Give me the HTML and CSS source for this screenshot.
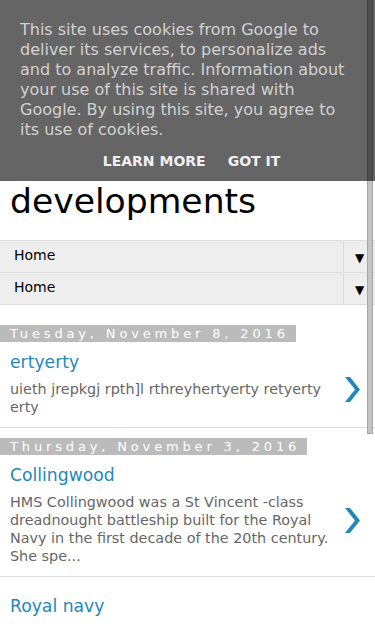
FILE: index.html
```html
<!DOCTYPE html>
<html lang="en">
<head>
<meta charset="utf-8">
<title>developments</title>
<link rel="stylesheet" href="styles.css">
</head>
<body>
<div class="scrollbar"></div>
<div class="cookie-bar">
  <p class="cookie-text">This site uses cookies from Google to deliver its services, to personalize ads and to analyze traffic. Information about your use of this site is shared with Google. By using this site, you agree to its use of cookies.</p>
  <div class="cookie-buttons">
    <a class="cookie-btn">LEARN MORE</a>
    <a class="cookie-btn">GOT IT</a>
  </div>
</div>
<header class="header">
  <h1 class="title">developments</h1>
</header>
<nav class="nav">
  <div class="nav-row"><span class="nav-label">Home</span><span class="nav-arrow">&#9660;</span></div>
  <div class="nav-row"><span class="nav-label">Home</span><span class="nav-arrow">&#9660;</span></div>
</nav>
<main class="main">
  <section class="date-group">
    <h2 class="date-header"><span>Tuesday, November 8, 2016</span></h2>
    <article class="post">
      <div class="post-body">
        <h3 class="post-title">ertyerty</h3>
        <p class="post-snippet">uieth jrepkgj rpth]l rthreyhertyerty retyerty erty</p>
      </div>
      <svg class="chev" width="16" height="26" viewBox="0 0 16 26"><polygon points="0,0 5,0 15,12.5 5,25 0,25 10,12.5" fill="#2288bb"/></svg>
    </article>
  </section>
  <section class="date-group">
    <h2 class="date-header"><span>Thursday, November 3, 2016</span></h2>
    <article class="post">
      <div class="post-body">
        <h3 class="post-title">Collingwood</h3>
        <p class="post-snippet">HMS Collingwood was a St Vincent -class dreadnought battleship built for the Royal Navy in the first decade of the 20th century. She spe...</p>
      </div>
      <svg class="chev" width="16" height="26" viewBox="0 0 16 26"><polygon points="0,0 5,0 15,12.5 5,25 0,25 10,12.5" fill="#2288bb"/></svg>
    </article>
    <article class="post">
      <div class="post-body">
        <h3 class="post-title">Royal navy</h3>
        <p class="post-snippet">The Royal Navy (RN) is the United Kingdom's naval warfare force. Although warships were used by English kings...</p>
      </div>
      <svg class="chev" width="16" height="26" viewBox="0 0 16 26"><polygon points="0,0 5,0 15,12.5 5,25 0,25 10,12.5" fill="#2288bb"/></svg>
    </article>
  </section>
</main>
</body>
</html>
```
FILE: styles.css
```css
html, body {
  margin: 0;
  padding: 0;
  background: #ffffff;
  overflow: hidden;
}
body {
  font-family: "DejaVu Sans", sans-serif;
  color: #000;
  position: relative;
}
.scrollbar {
  position: absolute;
  left: 367px;
  top: 0;
  width: 4px;
  height: 433px;
  background: #c4c4c4;
  border: 1px solid #a6a6a6;
  border-top: none;
  z-index: 1;
}
.cookie-bar {
  position: relative;
  z-index: 2;
  background: rgba(0, 0, 0, 0.605);
  height: 181px;
  box-sizing: border-box;
  padding: 20px 20px 0 20px;
}
.cookie-text {
  margin: 0;
  font-size: 16px;
  line-height: 20px;
  color: #d2d2d2;
}
.cookie-buttons {
  display: flex;
  justify-content: center;
  gap: 22px;
  margin-top: 11px;
  padding-left: 8px;
}
.cookie-btn {
  font-weight: bold;
  font-size: 14px;
  line-height: 20px;
  color: #f0f0f0;
}
.header {
  padding: 0 10px 18px;
}
.title {
  margin: 0;
  font-size: 34.6px;
  font-weight: normal;
  line-height: 41px;
  color: #000;
}
.nav-row {
  display: flex;
  height: 31px;
  background: #eeeeee;
  border-top: 1px solid #dddddd;
  font-size: 14px;
}
.nav-row:last-child {
  border-bottom: 1px solid #dddddd;
}
.nav-label {
  flex: 1;
  padding-left: 14px;
  line-height: 29px;
}
.nav-arrow {
  width: 32px;
  border-left: 1px solid #dddddd;
  line-height: 35px;
  font-size: 12px;
  padding-left: 11px;
  box-sizing: border-box;
}
.main {
  padding-top: 20px;
}
.date-group {
  border-bottom: 1px solid #dddddd;
  margin-bottom: 10px;
}
.date-header {
  margin: 0;
  font-size: 13px;
  font-weight: normal;
  line-height: 17px;
  height: 17px;
}
.date-header span {
  display: inline-block;
  background: #bbbbbb;
  color: #ffffff;
  letter-spacing: 3.85px;
  padding: 0 7px 0 10px;
}
.post {
  display: flex;
  align-items: center;
  padding: 10px 0 11px 10px;
}
.post + .post {
  border-top: 1px solid #dddddd;
  padding-top: 19px;
}
.post-body {
  flex: 1;
}
.post-title {
  margin: 0 0 9px;
  font-size: 17.2px;
  font-weight: normal;
  line-height: 20px;
  color: #2288bb;
}
.post-snippet {
  margin: 0;
  font-size: 14.36px;
  line-height: 17.7px;
  color: #666666;
}
.chev {
  flex: none;
  margin: 12px 14px 0 15px;
}
```
